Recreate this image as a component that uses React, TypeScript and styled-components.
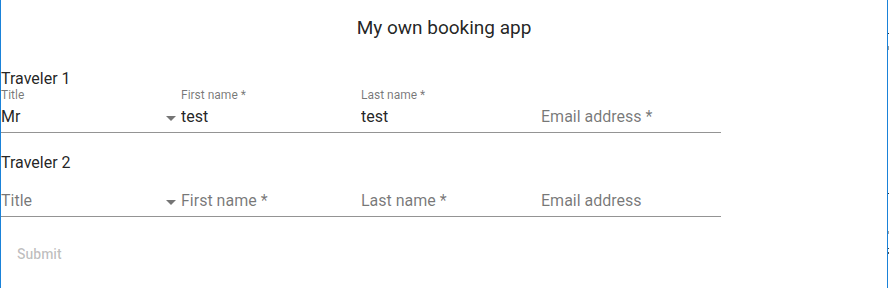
import styled, { createGlobalStyle } from 'styled-components';

type Traveler = {
  title: string;
  firstName: string;
  lastName: string;
  emailLabel: string;
};

const travelers: Traveler[] = [
  { title: 'Mr', firstName: 'test', lastName: 'test', emailLabel: 'Email address *' },
  { title: '', firstName: '', lastName: '', emailLabel: 'Email address' },
];

export default function App() {
  return (
    <>
      <GlobalStyle />
      <Window>
        <Main>
          <AppTitle>My own booking app</AppTitle>
          <form onSubmit={(e) => e.preventDefault()}>
            {travelers.map((t, i) => (
              <TravelerBlock key={i} $first={i === 0}>
                <TravelerHeading>Traveler {i + 1}</TravelerHeading>
                <FieldRow>
                  <Field>
                    <FieldLabel>{t.title ? 'Title' : ''}</FieldLabel>
                    <InputBox>
                      <SelectValue $empty={!t.title}>{t.title || 'Title'}</SelectValue>
                      <ArrowIcon viewBox="0 0 10 5" width="10" height="5">
                        <path d="M0 0l5 5 5-5z" />
                      </ArrowIcon>
                    </InputBox>
                  </Field>
                  <TextField label="First name *" value={t.firstName} />
                  <TextField label="Last name *" value={t.lastName} />
                  <TextField label={t.emailLabel} value="" />
                </FieldRow>
              </TravelerBlock>
            ))}
            <SubmitButton type="submit" disabled>
              Submit
            </SubmitButton>
          </form>
        </Main>
        <WindowEdge />
        <Gutter />
      </Window>
    </>
  );
}

function TextField({ label, value }: { label: string; value: string }) {
  return (
    <Field>
      <FieldLabel>{value ? label : ''}</FieldLabel>
      <InputBox>
        <Input placeholder={value ? '' : label} defaultValue={value} />
      </InputBox>
    </Field>
  );
}

const GlobalStyle = createGlobalStyle`
  html, body {
    margin: 0;
    padding: 0;
    background: #ffffff;
  }
  body {
    font-family: Roboto, "Liberation Sans", sans-serif;
    color: rgba(0, 0, 0, 0.87);
  }
`;

const Window = styled.div`
  display: flex;
  height: 288px;
  border-left: 1px solid #1a82d9;
  box-sizing: border-box;
`;

const Main = styled.div`
  width: 886px;
`;

const WindowEdge = styled.div`
  width: 1px;
  background: #1a82d9;
`;

const Gutter = styled.div`
  width: 1px;
  background: linear-gradient(
    to bottom,
    #ffffff 0 33px,
    #333333 33px 34px,
    #ffffff 34px 46px,
    #9a9a9a 46px 50px,
    #ffffff 50px 193px,
    #333333 193px 194px,
    #ffffff 194px 231px,
    #a0a0a0 231px 234px,
    #ffffff 234px 248px,
    #444444 248px 249px,
    #ffffff 249px 252px,
    #555555 252px 254px,
    #ffffff 254px
  );
`;

const AppTitle = styled.h1`
  margin: 16px 0 0;
  font-size: 19px;
  line-height: 24px;
  font-weight: 400;
  text-align: center;
  color: rgba(0, 0, 0, 0.87);
`;

const TravelerBlock = styled.div<{ $first: boolean }>`
  margin-top: ${(p) => (p.$first ? '29px' : '20px')};
`;

const TravelerHeading = styled.div`
  font-size: 16px;
  line-height: 19px;
  color: rgba(0, 0, 0, 0.87);
`;

const FieldRow = styled.div`
  display: flex;
  width: 720px;
`;

const Field = styled.div`
  width: 180px;
  display: flex;
  flex-direction: column;
  border-bottom: 1px solid rgba(0, 0, 0, 0.42);
`;

const FieldLabel = styled.div`
  height: 14px;
  font-size: 12px;
  line-height: 14px;
  color: rgba(0, 0, 0, 0.54);
`;

const InputBox = styled.div`
  display: flex;
  align-items: center;
  padding: 5px 0 6px;
`;

const Input = styled.input`
  flex: 1;
  min-width: 0;
  height: 19px;
  padding: 0;
  border: none;
  outline: none;
  background: transparent;
  font-family: Roboto, "Liberation Sans", sans-serif;
  font-size: 16px;
  line-height: 19px;
  color: rgba(0, 0, 0, 0.87);

  &::placeholder {
    color: rgba(0, 0, 0, 0.54);
    opacity: 1;
  }
`;

const SelectValue = styled.div<{ $empty: boolean }>`
  flex: 1;
  font-size: 16px;
  line-height: 19px;
  color: ${(p) => (p.$empty ? 'rgba(0, 0, 0, 0.54)' : 'rgba(0, 0, 0, 0.87)')};
`;

const ArrowIcon = styled.svg`
  margin: 3px 5px 0 0;
  fill: rgba(0, 0, 0, 0.54);
`;

const SubmitButton = styled.button`
  display: flex;
  align-items: center;
  height: 36px;
  margin-top: 19px;
  padding: 0 16px;
  border: none;
  background: transparent;
  font-family: Roboto, "Liberation Sans", sans-serif;
  font-size: 14px;
  line-height: 20px;
  font-weight: 500;
  color: rgba(0, 0, 0, 0.26);
  cursor: default;
`;
